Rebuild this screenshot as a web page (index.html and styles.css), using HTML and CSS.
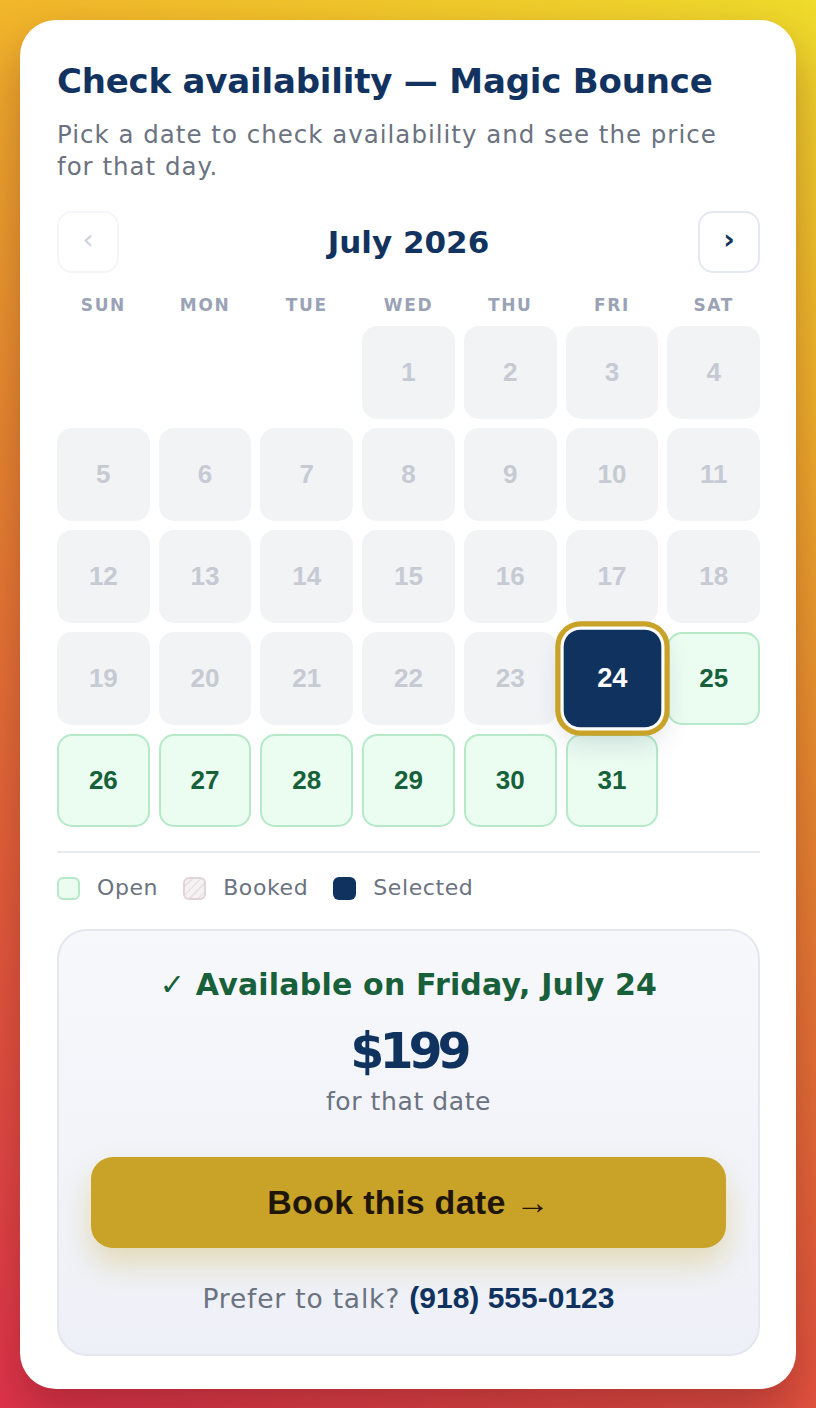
FILE: index.html
```html
<!DOCTYPE html>
<html lang="en">
<head>
<meta charset="utf-8">
<title>Check availability — Magic Bounce</title>
<link rel="stylesheet" href="styles.css">
</head>
<body>
<main class="card">
  <h1 class="title">Check availability — Magic Bounce</h1>
  <p class="subtitle">Pick a date to check availability and see the price for that day.</p>

  <div class="nav">
    <button class="nav-btn nav-btn--disabled" aria-label="Previous month">‹</button>
    <div class="month">July 2026</div>
    <button class="nav-btn" aria-label="Next month">›</button>
  </div>

  <div class="weekdays">
    <span>SUN</span><span>MON</span><span>TUE</span><span>WED</span><span>THU</span><span>FRI</span><span>SAT</span>
  </div>

  <div class="grid">
    <span class="day day--blank"></span>
    <span class="day day--blank"></span>
    <span class="day day--blank"></span>
    <span class="day day--past">1</span>
    <span class="day day--past">2</span>
    <span class="day day--past">3</span>
    <span class="day day--past">4</span>
    <span class="day day--past">5</span>
    <span class="day day--past">6</span>
    <span class="day day--past">7</span>
    <span class="day day--past">8</span>
    <span class="day day--past">9</span>
    <span class="day day--past">10</span>
    <span class="day day--past">11</span>
    <span class="day day--past">12</span>
    <span class="day day--past">13</span>
    <span class="day day--past">14</span>
    <span class="day day--past">15</span>
    <span class="day day--past">16</span>
    <span class="day day--past">17</span>
    <span class="day day--past">18</span>
    <span class="day day--past">19</span>
    <span class="day day--past">20</span>
    <span class="day day--past">21</span>
    <span class="day day--past">22</span>
    <span class="day day--past">23</span>
    <span class="day day--selected">24</span>
    <span class="day day--open">25</span>
    <span class="day day--open">26</span>
    <span class="day day--open">27</span>
    <span class="day day--open">28</span>
    <span class="day day--open">29</span>
    <span class="day day--open">30</span>
    <span class="day day--open">31</span>
  </div>

  <div class="legend">
    <span class="legend-item"><span class="swatch swatch--open"></span>Open</span>
    <span class="legend-item"><span class="swatch swatch--booked"></span>Booked</span>
    <span class="legend-item"><span class="swatch swatch--selected"></span>Selected</span>
  </div>

  <section class="result">
    <div class="available">✓ Available on Friday, July 24</div>
    <div class="price">$199</div>
    <div class="price-note">for that date</div>
    <button class="book">Book this date →</button>
    <p class="talk">Prefer to talk? <strong class="phone">(918) 555-0123</strong></p>
  </section>
</main>
</body>
</html>
```

FILE: styles.css
```css
* { box-sizing: border-box; }

html, body { margin: 0; }

body {
  min-height: 1408px;
  padding: 20px;
  background: linear-gradient(205deg, #efdc2b 0%, #f2b52b 22%, #e98a30 45%, #e4603a 70%, #e0344a 100%);
  font-family: "DejaVu Sans", "Liberation Sans", sans-serif;
}

.card {
  background: #fff;
  border-radius: 36px;
  padding: 40px 36px 33px 37px;
  min-height: 1368px;
  display: flex;
  flex-direction: column;
  box-shadow: 0 24px 50px rgba(80, 10, 30, 0.35);
}

.title {
  margin: 0;
  font-size: 34px;
  line-height: 42px;
  font-weight: 700;
  color: #12335f;
  letter-spacing: -0.2px;
  white-space: nowrap;
}

.subtitle {
  margin: 17px 0 0;
  max-width: 690px;
  font-size: 24.5px;
  line-height: 32px;
  font-weight: 400;
  letter-spacing: 1px;
  color: #6b7280;
}

.nav {
  margin-top: 28px;
  display: flex;
  align-items: center;
  justify-content: space-between;
}

.nav-btn {
  width: 62px;
  height: 62px;
  border-radius: 15px;
  border: 2px solid #e4e8f0;
  background: #fff;
  color: #12335f;
  font-size: 28px;
  font-family: "DejaVu Sans", sans-serif;
  font-weight: 700;
  line-height: 1;
  padding: 0 0 4px;
  display: flex;
  align-items: center;
  justify-content: center;
}

.nav-btn--disabled {
  opacity: 0.4;
  color: #7f8ca6;
  font-weight: 400;
}

.month {
  font-size: 31px;
  font-weight: 700;
  color: #12335f;
}

.weekdays {
  margin-top: 19px;
  display: grid;
  grid-template-columns: repeat(7, 1fr);
  column-gap: 9px;
  text-align: center;
  font-size: 17px;
  line-height: 26px;
  font-weight: 700;
  letter-spacing: 1.6px;
  color: #9aa3b5;
}

.grid {
  margin-top: 8px;
  display: grid;
  grid-template-columns: repeat(7, 1fr);
  grid-auto-rows: 93px;
  gap: 9px;
}

.day {
  border-radius: 15px;
  display: flex;
  align-items: center;
  justify-content: center;
  font-family: "Liberation Sans", Arial, sans-serif;
  font-weight: 700;
  font-size: 26px;
}

.day--past {
  background: #f2f3f5;
  color: #c6cad3;
}

.day--open {
  background: #ebfcf1;
  border: 2px solid #b5e9c7;
  color: #16613a;
}

.day--selected {
  background: #10325e;
  color: #fff;
  border-radius: 16px;
  transform: scale(1.05);
  box-shadow: 0 0 0 3px #fff, 0 0 0 8px #c9a228, 0 12px 26px rgba(16, 50, 94, 0.18);
  position: relative;
  z-index: 1;
}

.legend {
  margin-top: 24px;
  border-top: 2px solid #e8eaf1;
  padding-top: 22px;
  display: flex;
  gap: 25px;
  font-size: 22px;
  line-height: 26px;
  letter-spacing: 0.6px;
  color: #6b7280;
}

.legend-item {
  display: flex;
  align-items: center;
  gap: 17px;
}

.swatch {
  width: 23px;
  height: 23px;
  border-radius: 6px;
  border: 2px solid transparent;
}

.swatch--open {
  background: #ebfcf1;
  border-color: #b5e9c7;
}

.swatch--booked {
  background: repeating-linear-gradient(135deg, #f6f2f3 0 4px, #e9e3e5 4px 6px);
  border-color: #e0d4d7;
}

.swatch--selected {
  background: #10325e;
}

.result {
  margin-top: 28px;
  border: 2px solid #e4e7ef;
  border-radius: 30px;
  background: linear-gradient(180deg, #f7f8fc 0%, #edf0f6 100%);
  padding: 34px 32px 38px;
  display: flex;
  flex-direction: column;
  align-items: center;
}

.available {
  font-size: 30px;
  line-height: 40px;
  font-weight: 700;
  color: #17603a;
  letter-spacing: 0.2px;
}

.price {
  margin-top: 18px;
  font-size: 49px;
  line-height: 58px;
  font-weight: 700;
  letter-spacing: -5px;
  color: #10325e;
}

.price-note {
  margin-top: 5px;
  font-size: 25px;
  line-height: 32px;
  letter-spacing: 0.6px;
  color: #6b7280;
}

.book {
  margin-top: 39px;
  width: 100%;
  height: 91px;
  border: none;
  border-radius: 22px;
  background: #c9a228;
  color: #1f1608;
  font-family: "Liberation Sans", Arial, sans-serif;
  font-weight: 700;
  font-size: 34px;
  letter-spacing: 0.3px;
  box-shadow: 0 16px 30px rgba(201, 162, 40, 0.3);
}

.talk {
  margin: 33px 0 0;
  font-size: 26.5px;
  line-height: 34px;
  letter-spacing: 0.8px;
  color: #6b7280;
}

.phone {
  font-family: "Liberation Sans", Arial, sans-serif;
  font-weight: 700;
  font-size: 30px;
  letter-spacing: 0;
  color: #10325e;
}
```
